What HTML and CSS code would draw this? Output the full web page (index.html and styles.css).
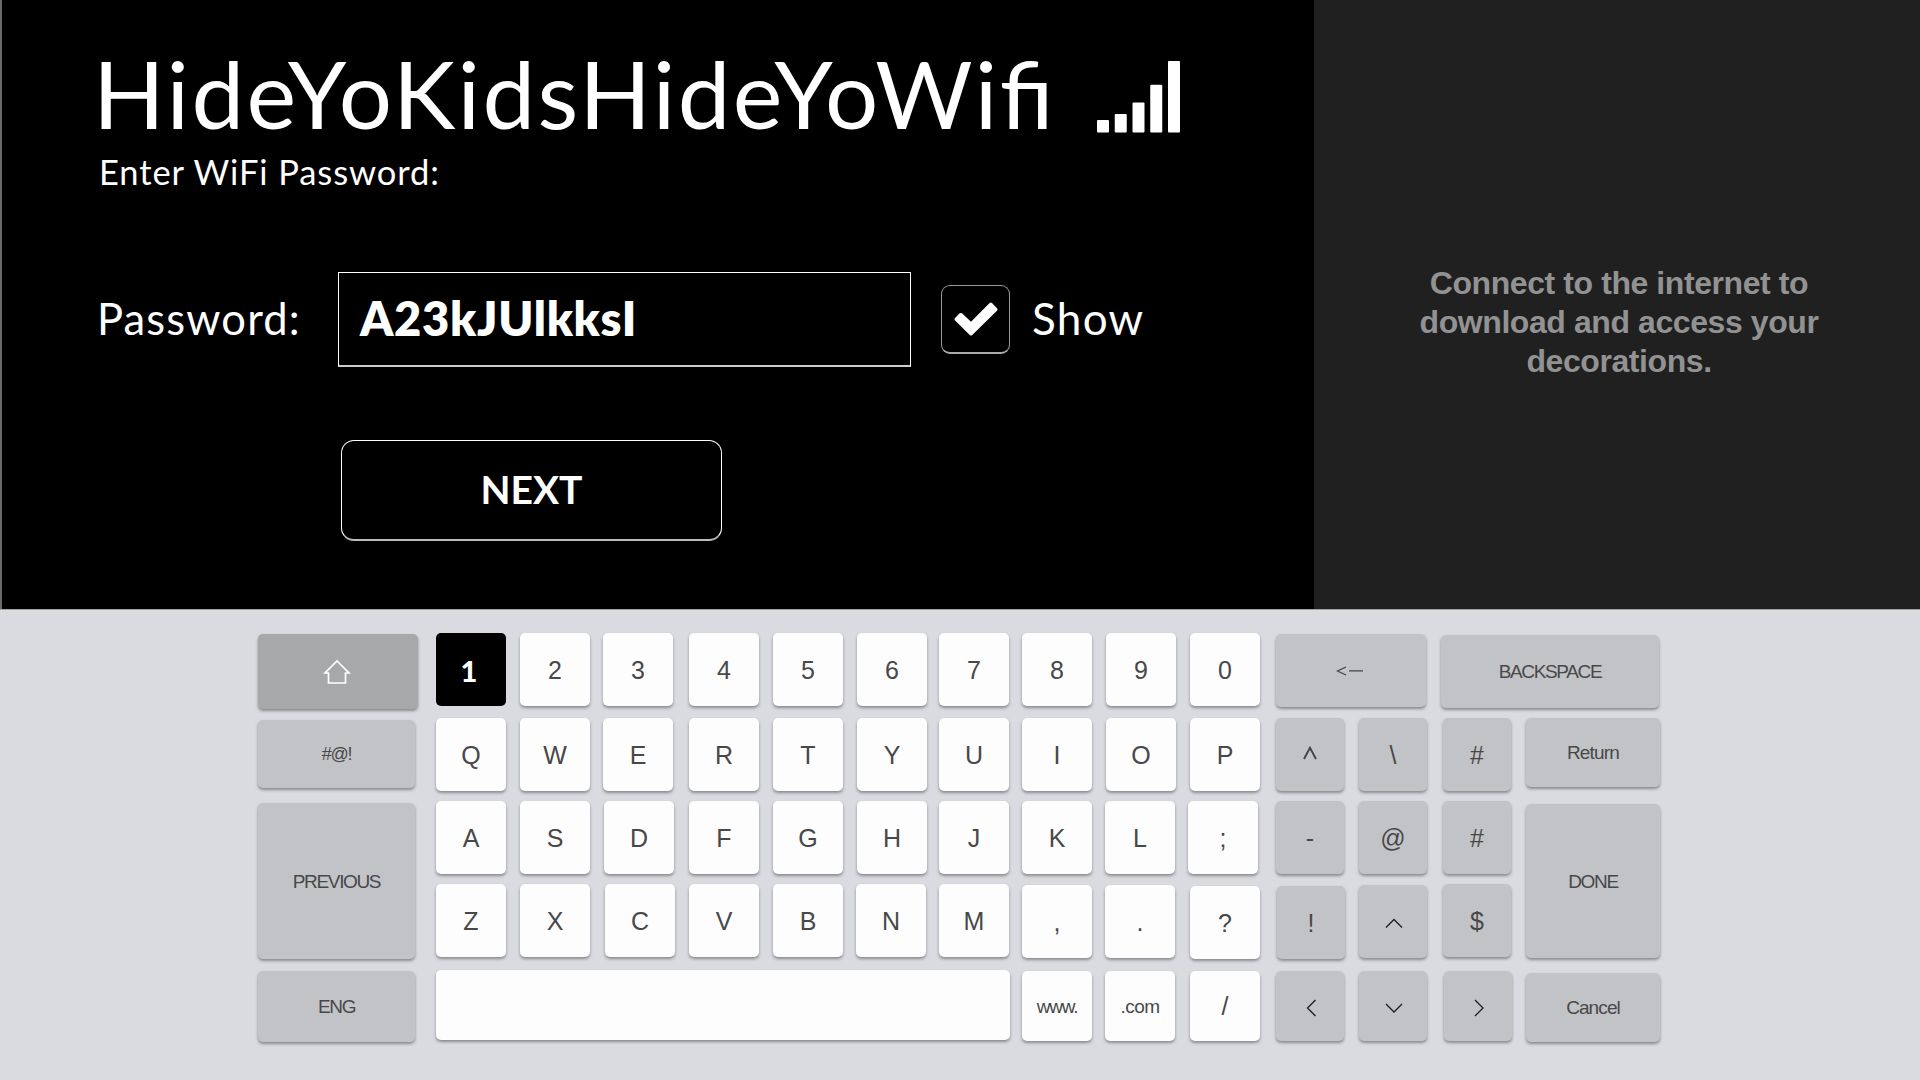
FILE: index.html
```html
<!DOCTYPE html>
<html lang="en">
<head>
<meta charset="utf-8">
<title>WiFi Password</title>
<link rel="stylesheet" href="styles.css">
</head>
<body>
<main class="top">
  <section class="setup">
    <header class="network">
      <h1 class="ssid">HideYoKidsHideYoWi<span class="lig">fi</span></h1>
      <svg class="signal" width="83" height="72" viewBox="0 0 83 72" fill="#fff">
        <rect x="0" y="59" width="12" height="12.5" rx="1"/>
        <rect x="17.75" y="53" width="12" height="18.5" rx="1"/>
        <rect x="35.5" y="41.5" width="12" height="30" rx="1"/>
        <rect x="53.25" y="23.7" width="12" height="47.8" rx="1"/>
        <rect x="71" y="0" width="12" height="71.5" rx="1"/>
      </svg>
    </header>
    <p class="hint">Enter WiFi Password:</p>
    <div class="form-row">
      <label class="label">Password:</label>
      <div class="field">A23kJUlkksI</div>
      <div class="checkbox">
        <svg width="44" height="34" viewBox="0 0 44 34"><path d="M0.8 18.2 Q0 17.2 0.8 16.2 L5.6 11.3 Q6.8 10.5 8 11.3 L17 19.8 L35.6 0.9 Q36.8 0 38 0.9 L43.2 6.4 Q44 7.4 43.2 8.6 L18 33.2 Q17 34 16 33.2 Z" fill="#fff"/></svg>
      </div>
      <span class="show">Show</span>
    </div>
    <button class="next">NEXT</button>
  </section>
  <aside class="side">
    <p class="side-text">Connect to the internet to<br>download and access your<br>decorations.</p>
  </aside>
</main>
<section class="keyboard">
  <div class="key gray shift"><svg width="30" height="26" viewBox="0 0 30 26"><path d="M15 2 L27 14 H23.5 V24 H6.5 V14 H3 Z" fill="none" stroke="#fff" stroke-width="1.7"/></svg></div>
  <div class="key active">1</div>
  <div class="key">2</div>
  <div class="key">3</div>
  <div class="key">4</div>
  <div class="key">5</div>
  <div class="key">6</div>
  <div class="key">7</div>
  <div class="key">8</div>
  <div class="key">9</div>
  <div class="key">0</div>
  <div class="key gray back"><svg width="28" height="14" viewBox="0 0 28 14"><path d="M10 3 L1.5 7 L10 11 M13 6.8 H27" fill="none" stroke="#444" stroke-width="1.3"/></svg></div>
  <div class="key gray word backspace">BACKSPACE</div>

  <div class="key gray word symbols">#@!</div>
  <div class="key">Q</div>
  <div class="key">W</div>
  <div class="key">E</div>
  <div class="key">R</div>
  <div class="key">T</div>
  <div class="key">Y</div>
  <div class="key">U</div>
  <div class="key">I</div>
  <div class="key">O</div>
  <div class="key">P</div>
  <div class="key gray small"><svg class="caret" width="16" height="14" viewBox="0 0 16 14"><path d="M2 13 L8 1.8 L14 13" fill="none" stroke="#444" stroke-width="1.9"/></svg></div>
  <div class="key gray small">\</div>
  <div class="key gray small">#</div>
  <div class="key gray word return">Return</div>

  <div class="key gray word previous">PREVIOUS</div>
  <div class="key">A</div>
  <div class="key">S</div>
  <div class="key key-d">D</div>
  <div class="key">F</div>
  <div class="key">G</div>
  <div class="key">H</div>
  <div class="key">J</div>
  <div class="key">K</div>
  <div class="key nudge-l1">L</div>
  <div class="key nudge-l2">;</div>
  <div class="key gray small">-</div>
  <div class="key gray small">@</div>
  <div class="key gray small">#</div>
  <div class="key gray word done">DONE</div>

  <div class="key">Z</div>
  <div class="key">X</div>
  <div class="key key-c">C</div>
  <div class="key">V</div>
  <div class="key">B</div>
  <div class="key nudge-l1">N</div>
  <div class="key">M</div>
  <div class="key drop1">,</div>
  <div class="key nudge-l1 drop1">.</div>
  <div class="key drop2">?</div>
  <div class="key gray small drop2 nudge-r1">!</div>
  <div class="key gray small drop1"><svg class="arrow" width="20" height="12" viewBox="0 0 20 12"><path d="M2 10.5 L10 2.5 L18 10.5" fill="none" stroke="#1c1c1c" stroke-width="1.3"/></svg></div>
  <div class="key gray small">$</div>

  <div class="key gray word eng">ENG</div>
  <div class="key space"></div>
  <div class="key low word url">www.</div>
  <div class="key low word url com nudge-l1">.com</div>
  <div class="key low">/</div>
  <div class="key gray small low"><svg class="arrow" width="12" height="20" viewBox="0 0 12 20"><path d="M10.5 2 L2.5 10 L10.5 18" fill="none" stroke="#1c1c1c" stroke-width="1.3"/></svg></div>
  <div class="key gray small low"><svg class="arrow" width="20" height="12" viewBox="0 0 20 12"><path d="M2 2 L10 10 L18 2" fill="none" stroke="#1c1c1c" stroke-width="1.3"/></svg></div>
  <div class="key gray small low nudge-r1"><svg class="arrow" width="12" height="20" viewBox="0 0 12 20"><path d="M2 2 L10 10 L2 18" fill="none" stroke="#1c1c1c" stroke-width="1.3"/></svg></div>
  <div class="key gray word cancel">Cancel</div>
</section>
</body>
</html>
```
FILE: styles.css
```css
* { box-sizing: border-box; }
body {
  margin: 0;
  width: 1920px;
  height: 1080px;
  overflow: hidden;
  background: #dadbe0;
  font-family: "Liberation Sans", Arial, sans-serif;
}
.top {
  display: flex;
  height: 610px;
  border-bottom: 1px solid #a3a3a5;
}
.setup {
  width: 1314px;
  padding: 39px 0 0 91px;
  background: #000;
  border-left: 2px solid #6a6a6a;
  color: #fff;
  font-family: Lato, sans-serif;
}
.network {
  display: flex;
  height: 110px;
}
.ssid {
  width: 1004px;
  margin: 0;
  font-size: 94px;
  line-height: 108px;
  font-weight: 400;
  white-space: nowrap;
  letter-spacing: 2.4px;
}
.lig { letter-spacing: 0; }
.signal { margin-top: 22px; }
.hint {
  margin: 0 0 0 6px;
  font-size: 34.5px;
  line-height: 46px;
  letter-spacing: .9px;
}
.form-row {
  display: flex;
  align-items: center;
  height: 95px;
  margin: 77px 0 0 4px;
}
.label {
  width: 241px;
  margin-top: -4px;
  font-size: 43.5px;
  line-height: 50px;
  letter-spacing: 1.15px;
}
.field {
  width: 573px;
  height: 95px;
  padding-left: 21px;
  border: 1px solid #fff;
  border-bottom: 2px solid #ccc;
  font-size: 47px;
  font-weight: 800;
  line-height: 91px;
  letter-spacing: .7px;
}
.checkbox {
  display: flex;
  align-items: center;
  justify-content: center;
  width: 69px;
  height: 69px;
  margin-left: 30px;
  border: 1px solid #999;
  border-bottom: 2px solid #aaa;
  border-radius: 9px;
}
.show {
  margin: -3px 0 0 22px;
  font-size: 44px;
  line-height: 50px;
  letter-spacing: 1.3px;
}
.next {
  display: block;
  width: 381px;
  height: 101px;
  margin: 73px 0 0 248px;
  padding: 0 0 2px;
  border: 1px solid #fff;
  border-bottom: 2px solid #bbb;
  border-radius: 13px;
  background: #000;
  color: #fff;
  font: 700 39px Lato, sans-serif;
}
.side {
  flex: 1;
  padding-top: 263.5px;
  background: #202020;
}
.side-text {
  margin: 0 0 0 4px;
  color: #929292;
  font-size: 32px;
  font-weight: 700;
  line-height: 39.2px;
  letter-spacing: -.42px;
  text-align: center;
}
.keyboard {
  display: grid;
  grid-template-columns: 178px 84px 83px 86px 84px 84px 82px 83px 84px 84px 85px 83px 84px 84px 135px;
  grid-template-rows: 85px 83px 83px 87px 71px;
  align-items: start;
  justify-items: start;
  padding: 23px 0 0 258px;
}
.key {
  display: flex;
  align-items: center;
  justify-content: center;
  width: 70px;
  height: 73px;
  padding-top: 1px;
  border-radius: 5px;
  background: #fdfdfd;
  box-shadow: 0 2px 3px rgba(60, 60, 65, .5);
  color: #484848;
  font-size: 25px;
}
.gray { background: #c2c3c7; }
.small { width: 68px; margin-left: 1px; }
.word {
  font-size: 19px;
  letter-spacing: -1.35px;
}
.low { height: 70px; }
.url { letter-spacing: -1.2px; }
.com { letter-spacing: -.6px; }
.active {
  padding-right: 4px;
  background: #000;
  box-shadow: none;
  color: #fff;
  font: 900 29px Lato, sans-serif;
}
.shift { width: 160px; height: 75px; padding-right: 2px; margin-top: 1px; background: #a7a8aa; }
.back { grid-column: span 2; width: 150px; padding-right: 2px; margin: 1px 0 0 1px; }
.backspace { grid-column: span 2; width: 218px; margin: 2px 0 0 -1px; }
.symbols { width: 157px; height: 68px; margin-top: 2px; font-size: 18px; letter-spacing: -1.3px; }
.return { width: 134px; height: 69px; letter-spacing: -.8px; }
.previous { grid-row: span 2; width: 157px; height: 156px; margin-top: 2px; }
.done { grid-row: span 2; width: 134px; height: 154px; margin-top: 3px; }
.eng { width: 157px; height: 71px; }
.cancel { width: 134px; height: 69px; margin-top: 2px; letter-spacing: -.9px; }
.space { grid-column: span 7; width: 574px; height: 70px; margin-top: -1px; }
.key-d { margin-left: 1px; }
.key-c { margin-left: 2px; }
.nudge-l1 { margin-left: -1px; }
.nudge-l2 { margin-left: -2px; }
.nudge-r1 { margin-left: 2px; }
.drop1 { margin-top: 1px; }
.drop2 { margin-top: 2px; }
.caret { margin-bottom: 5px; }
.arrow { margin: 2px 0 0 2px; }
```
